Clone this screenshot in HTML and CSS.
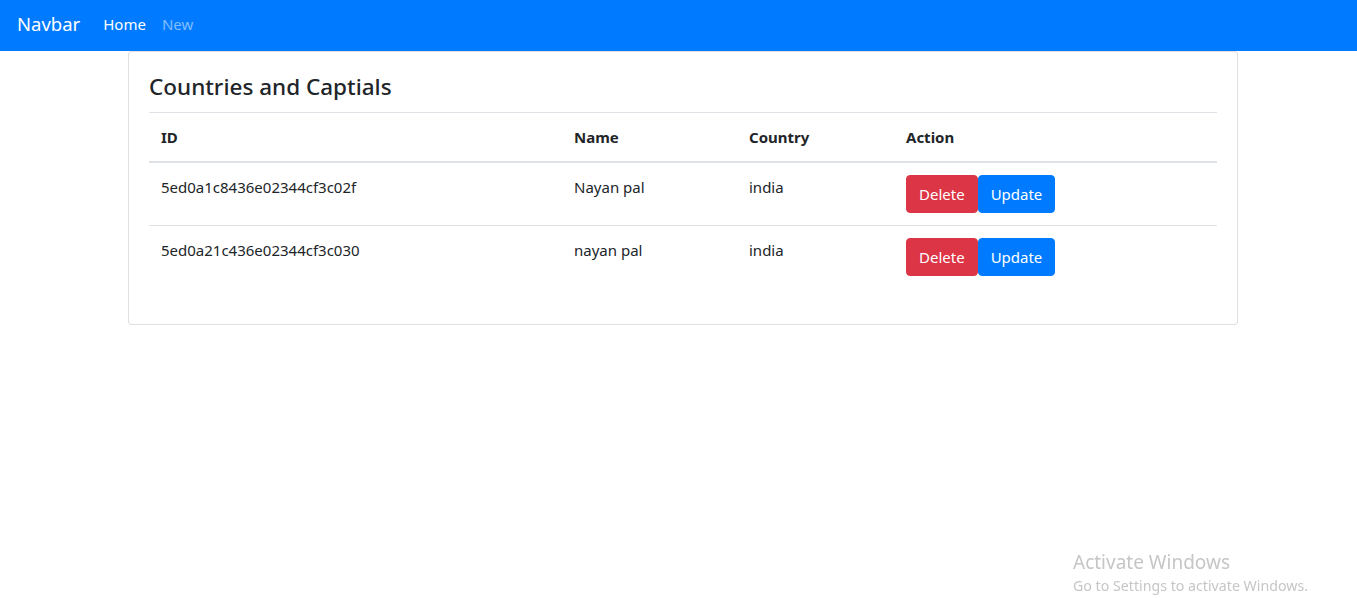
FILE: index.html
```html
<!DOCTYPE html>
<html lang="en">
<head>
<meta charset="utf-8">
<title>Countries and Captials</title>
<link rel="stylesheet" href="styles.css">
</head>
<body>
<nav class="navbar">
  <a class="brand" href="#">Navbar</a>
  <a class="nav-link active" href="#">Home</a>
  <a class="nav-link muted" href="#">New</a>
</nav>
<main class="container">
  <section class="card">
    <h4 class="card-title">Countries and Captials</h4>
    <table class="table">
      <thead>
        <tr>
          <th class="c-id">ID</th>
          <th class="c-name">Name</th>
          <th class="c-country">Country</th>
          <th class="c-action">Action</th>
        </tr>
      </thead>
      <tbody>
        <tr>
          <td class="id-cell">5ed0a1c8436e02344cf3c02f</td>
          <td>Nayan pal</td>
          <td>india</td>
          <td><button class="btn btn-danger">Delete</button><button class="btn btn-primary">Update</button></td>
        </tr>
        <tr>
          <td class="id-cell">5ed0a21c436e02344cf3c030</td>
          <td>nayan pal</td>
          <td>india</td>
          <td><button class="btn btn-danger">Delete</button><button class="btn btn-primary">Update</button></td>
        </tr>
      </tbody>
    </table>
  </section>
</main>
<div class="watermark">
  <div class="wm-title">Activate Windows</div>
  <div class="wm-sub">Go to Settings to activate Windows.</div>
</div>
</body>
</html>
```
FILE: styles.css
```css
* { box-sizing: border-box; }
html, body { margin: 0; padding: 0; }
body {
  font-family: "Noto Sans", "Open Sans", sans-serif;
  font-size: 15px;
  line-height: 24px;
  color: #212529;
  background: #fff;
}
.navbar {
  height: 51px;
  background: #007bff;
  display: flex;
  align-items: center;
  padding: 0 16px 4px 16px;
}
.brand {
  color: #fff;
  font-size: 18.5px;
  text-decoration: none;
  margin-right: 14px;
  padding: 0 1px;
}
.nav-link {
  font-size: 15px;
  text-decoration: none;
  padding: 8px 8px;
}
.nav-link.active { color: #fff; }
.nav-link.muted { color: rgba(255,255,255,0.5); }
.container {
  width: 1110px;
  margin-left: 128px;
}
.card {
  border: 1px solid rgba(0,0,0,0.125);
  border-radius: 4px;
  padding: 20px;
  background: #fff;
}
.card-title {
  margin: 0 0 12px 0;
  font-size: 22.5px;
  font-weight: 500;
  line-height: 28px;
  padding-top: 1px;
  height: 28px;
}
.table {
  width: 100%;
  border-collapse: collapse;
  margin-bottom: 16px;
}
.table th, .table td {
  padding: 12px;
  text-align: left;
  vertical-align: top;
  border-top: 1px solid #dee2e6;
}
.table thead th {
  font-weight: 700;
  border-bottom: 2px solid #dee2e6;
}
.c-id { width: 413px; }
.c-name { width: 175px; }
.c-country { width: 157px; }
.btn {
  font-family: inherit;
  font-size: 15px;
  line-height: 24px;
  color: #fff;
  border: 1px solid transparent;
  border-radius: 4px;
  padding: 6px 12px;
  cursor: pointer;
  vertical-align: top;
}
.btn-danger { background: #dc3545; border-color: #dc3545; }
.btn-primary { background: #007bff; border-color: #007bff; }
.watermark {
  position: fixed;
  left: 1073px;
  top: 551px;
  color: #c6c6c6;
  line-height: 1.2;
}
.wm-title { font-size: 19px; }
.wm-sub { font-size: 14.2px; margin-top: 3px; }
```
